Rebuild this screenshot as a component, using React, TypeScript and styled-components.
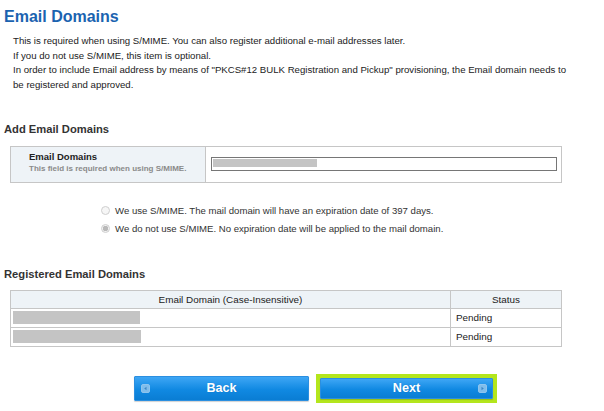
import React from "react";
import styled, { createGlobalStyle } from "styled-components";

const Global = createGlobalStyle`
  html, body { margin: 0; padding: 0; background: #fff; }
  body { font-family: "Liberation Sans", Arial, sans-serif; color: #222; }
`;

const Page = styled.div`
  width: 604px;
  height: 411px;
  padding: 7px 0 0 4px;
  box-sizing: border-box;
  overflow: hidden;
`;

const Title = styled.h1`
  margin: 0;
  font-size: 16px;
  line-height: 20px;
  font-weight: bold;
  color: #1b63b0;
`;

const Intro = styled.div`
  margin: 7px 0 0 9px;
  font-size: 9.63px;
  line-height: 14.7px;
  color: #222;
`;

const IntroLine = styled.div`
  white-space: nowrap;
`;

const SectionTitle = styled.h2<{ $top: number }>`
  margin: ${(p) => p.$top}px 0 0 0;
  font-size: 11.2px;
  line-height: 14px;
  font-weight: bold;
  color: #333;
`;

const FormTable = styled.div`
  margin: 10px 0 0 6px;
  width: 552px;
  height: 37px;
  box-sizing: border-box;
  border: 1.5px solid #c6c6c6;
  display: grid;
  grid-template-columns: 195px 1fr;
`;

const LabelCell = styled.div`
  background: #eef3f7;
  border-right: 1.5px solid #c6c6c6;
  padding: 4px 0 0 18px;
  display: flex;
  flex-direction: column;
`;

const Label = styled.div`
  font-size: 9.5px;
  line-height: 12px;
  font-weight: bold;
  color: #222;
`;

const SubLabel = styled.div`
  font-size: 8px;
  line-height: 12px;
  font-weight: bold;
  color: #8a8a8a;
`;

const InputCell = styled.div`
  padding: 10px 4px 0 5px;
`;

const FakeInput = styled.div`
  height: 14px;
  box-sizing: border-box;
  border: 1.5px solid #767676;
  padding: 1px 0 0 1px;
`;

const Redact = styled.div<{ $w: number; $h: number }>`
  width: ${(p) => p.$w}px;
  height: ${(p) => p.$h}px;
  background: #c4c4c4;
`;

const RadioGroup = styled.div`
  margin: 21px 0 0 97px;
  display: flex;
  flex-direction: column;
  gap: 4px;
`;

const RadioRow = styled.label`
  display: flex;
  align-items: center;
  gap: 5px;
  height: 14px;
  font-size: 9.6px;
  color: #333;
`;

const RadioDot = styled.span<{ $checked?: boolean }>`
  width: 9px;
  height: 9px;
  border-radius: 50%;
  box-sizing: border-box;
  border: 1px solid #cfcfcf;
  background: ${(p) =>
    p.$checked
      ? "radial-gradient(circle, #b9b9b9 0 2.5px, #f2f2f2 3px)"
      : "#f6f6f6"};
`;

const ListTable = styled.table`
  margin: 9px 0 0 6px;
  width: 552px;
  border-collapse: collapse;
  font-size: 9.9px;
  color: #222;
  td, th {
    border: 1.5px solid #c6c6c6;
    padding: 0;
  }
`;

const HeadCell = styled.th<{ $w?: number }>`
  background: #eef3f7;
  height: 17px;
  font-weight: normal;
  text-align: center;
  color: #222;
  ${(p) => (p.$w ? `width: ${p.$w}px;` : "")}
`;

const Cell = styled.td`
  height: 18px;
  padding: 0 0 0 5px !important;
  vertical-align: middle;
`;

const RedactCell = styled.td`
  height: 18px;
  padding: 0 0 0 2px !important;
  vertical-align: middle;
`;

const Buttons = styled.div`
  margin: 27px 0 0 130px;
  display: flex;
  align-items: center;
  gap: 7px;
`;

const Highlight = styled.div`
  padding: 4px;
  background: #b4e61c;
`;

const BlueButton = styled.button<{ $w: number; $h: number }>`
  position: relative;
  width: ${(p) => p.$w}px;
  height: ${(p) => p.$h}px;
  border: 1px solid #2b8fe0;
  border-radius: 1px;
  background: linear-gradient(#3ea6f5, #1089e2 55%, #0a7dd3);
  box-shadow: 0 1px 1px rgba(0, 0, 0, 0.18);
  color: #fff;
  font-family: "Liberation Sans", Arial, sans-serif;
  font-size: 12.6px;
  font-weight: bold;
  display: flex;
  align-items: center;
  justify-content: center;
  padding: 0;
  text-shadow: 0 0 1px rgba(0, 60, 120, 0.3);
`;

const ArrowBadge = styled.span<{ $side: "left" | "right" }>`
  position: absolute;
  top: 50%;
  ${(p) => (p.$side === "left" ? "left: 6px;" : "right: 5px;")}
  margin-top: -4.5px;
  width: 9px;
  height: 9px;
  display: flex;
`;

function Arrow({ dir }: { dir: "left" | "right" }) {
  return (
    <svg width="9" height="9" viewBox="0 0 9 9">
      <rect x="0.5" y="0.5" width="8" height="8" rx="1.5" fill="#7fbdeb" stroke="#9fcdf0" strokeWidth="0.8" />
      {dir === "left" ? (
        <path d="M5.5 2.8 L3.2 4.5 L5.5 6.2 Z" fill="#3c86c4" />
      ) : (
        <path d="M3.5 2.8 L5.8 4.5 L3.5 6.2 Z" fill="#3c86c4" />
      )}
    </svg>
  );
}

export default function App() {
  return (
    <>
      <Global />
      <Page>
        <Title>Email Domains</Title>
        <Intro>
          <IntroLine>This is required when using S/MIME. You can also register additional e-mail addresses later.</IntroLine>
          <IntroLine>If you do not use S/MIME, this item is optional.</IntroLine>
          <IntroLine>
            In order to include Email address by means of "PKCS#12 BULK Registration and Pickup" provisioning, the Email domain needs to
          </IntroLine>
          <IntroLine>be registered and approved.</IntroLine>
        </Intro>

        <SectionTitle $top={29}>Add Email Domains</SectionTitle>
        <FormTable>
          <LabelCell>
            <Label>Email Domains</Label>
            <SubLabel>This field is required when using S/MIME.</SubLabel>
          </LabelCell>
          <InputCell>
            <FakeInput>
              <Redact $w={104} $h={8} />
            </FakeInput>
          </InputCell>
        </FormTable>

        <RadioGroup>
          <RadioRow>
            <RadioDot />
            We use S/MIME. The mail domain will have an expiration date of 397 days.
          </RadioRow>
          <RadioRow>
            <RadioDot $checked />
            We do not use S/MIME. No expiration date will be applied to the mail domain.
          </RadioRow>
        </RadioGroup>

        <SectionTitle $top={31}>Registered Email Domains</SectionTitle>
        <ListTable>
          <thead>
            <tr>
              <HeadCell>Email Domain (Case-Insensitive)</HeadCell>
              <HeadCell $w={110}>Status</HeadCell>
            </tr>
          </thead>
          <tbody>
            <tr>
              <RedactCell>
                <Redact $w={127} $h={13} />
              </RedactCell>
              <Cell>Pending</Cell>
            </tr>
            <tr>
              <RedactCell>
                <Redact $w={128} $h={13} />
              </RedactCell>
              <Cell>Pending</Cell>
            </tr>
          </tbody>
        </ListTable>

        <Buttons>
          <BlueButton $w={175} $h={25}>
            <ArrowBadge $side="left">
              <Arrow dir="left" />
            </ArrowBadge>
            Back
          </BlueButton>
          <Highlight>
            <BlueButton $w={173} $h={21}>
              Next
              <ArrowBadge $side="right">
                <Arrow dir="right" />
              </ArrowBadge>
            </BlueButton>
          </Highlight>
        </Buttons>
      </Page>
    </>
  );
}
